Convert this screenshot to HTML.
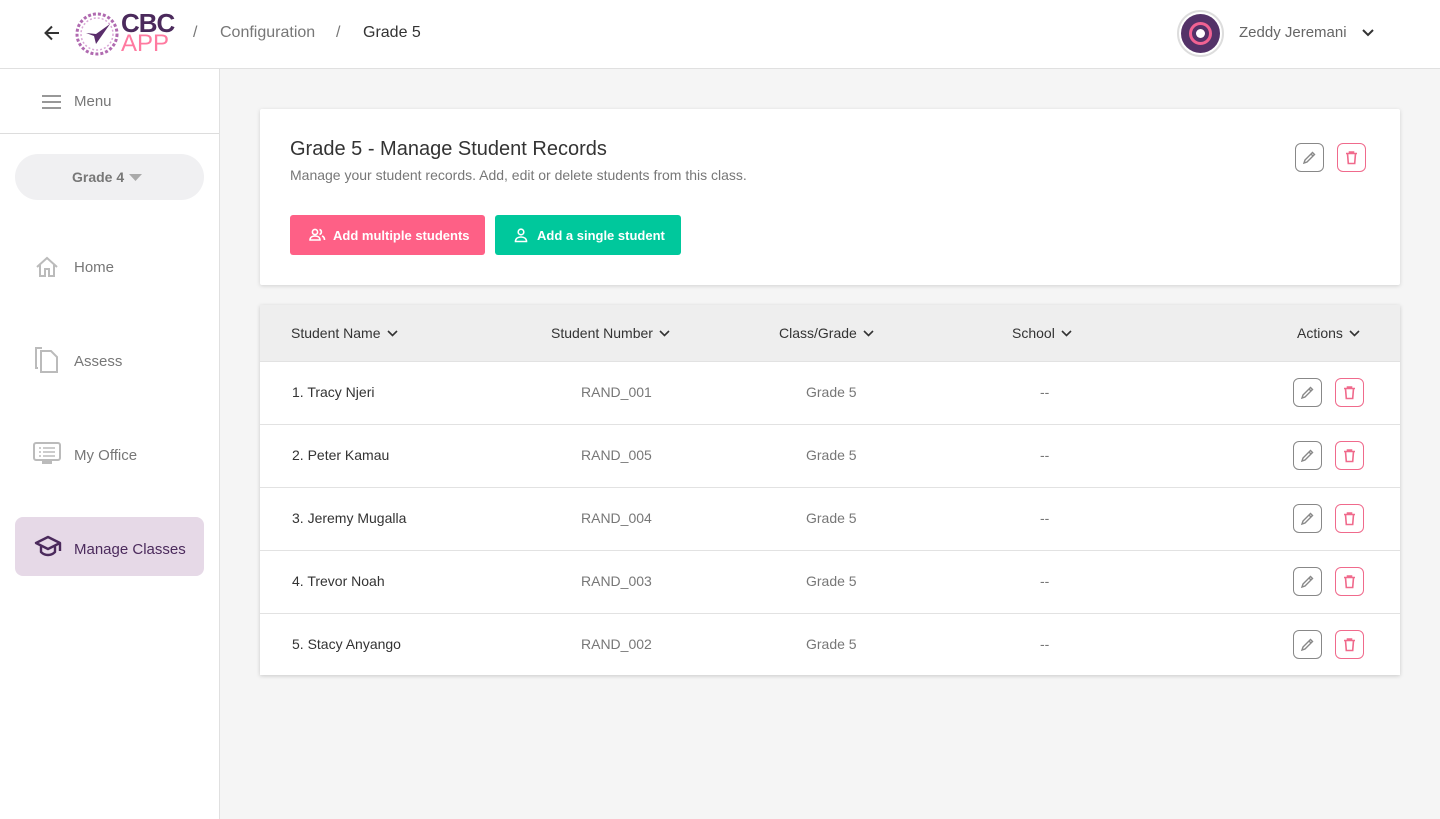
<!DOCTYPE html>
<html><head><meta charset="utf-8"><style>
*{box-sizing:border-box;margin:0;padding:0}
body{width:1440px;height:819px;overflow:hidden;font-family:"Liberation Sans",Roboto,sans-serif;background:#f5f5f5;position:relative;color:#333}
.hdr{position:absolute;left:0;top:0;width:1440px;height:69px;background:#fff;border-bottom:1px solid #e0e0e0}
.side{position:absolute;left:0;top:69px;width:220px;height:750px;background:#fff;border-right:1px solid #e0e0e0}
.abs{position:absolute}
.card{position:absolute;left:260px;top:109px;width:1140px;height:176px;background:#fff;box-shadow:0 1px 4px rgba(0,0,0,.15);border-radius:2px}
.tbl{position:absolute;left:260px;top:305px;width:1140px;height:370px;background:#fff;box-shadow:0 1px 4px rgba(0,0,0,.18)}
.th{position:absolute;left:0;top:0;width:1140px;height:56px;background:#eee}
.row{position:absolute;left:0;width:1140px;height:63px;border-top:1px solid #e2e2e2}
.t{position:absolute;font-size:14px;white-space:nowrap}
.th .t svg{margin-left:6px;vertical-align:1px}
.ib{position:absolute;width:29px;height:29px;border:1.5px solid #888;border-radius:6px;background:#fff}
.ib.d{border-color:#f06a8c}
.ib svg{position:absolute;left:6px;top:6px}
.nav{position:absolute;left:74px;font-size:15px;color:#777}
</style></head><body>
<div class="hdr">
 <svg class="abs" style="left:42px;top:23px" width="20" height="20" viewBox="0 0 20 20"><path d="M17 10H4M10 3.5L3.5 10 10 16.5" stroke="#333" stroke-width="2" fill="none"/></svg>
 <svg class="abs" style="left:74px;top:11px" width="46" height="46" viewBox="0 0 46 46"><circle cx="23" cy="23" r="20" fill="none" stroke="#b06ab0" stroke-width="3" stroke-dasharray="3 2"/><circle cx="23" cy="23" r="16" fill="none" stroke="#d9a6d6" stroke-width="1.5" stroke-dasharray="2 2"/><path d="M12 22l8 3 2 8 14-20-14 10" fill="#5a2d6b"/></svg>
 <div class="abs" style="left:121px;top:10px;font-size:26px;font-weight:bold;color:#4b2a5c;letter-spacing:-1px;line-height:26px">CBC</div>
 <div class="abs" style="left:121px;top:32px;font-size:24px;color:#ff7aa0;line-height:24px">APP</div>
 <div class="t" style="left:193px;top:24px;font-size:16px;color:#777">/</div>
 <div class="t" style="left:220px;top:24px;font-size:16px;color:#777">Configuration</div>
 <div class="t" style="left:336px;top:24px;font-size:16px;color:#777">/</div>
 <div class="t" style="left:363px;top:24px;font-size:16px;color:#333">Grade 5</div>
 <div class="abs" style="left:1177px;top:10px;width:47px;height:47px;border-radius:50%;border:2px solid #ddd;background:#fff"></div>
 <div class="abs" style="left:1181px;top:14px;width:39px;height:39px;border-radius:50%;background:#533268"></div>
 <div class="abs" style="left:1189px;top:22px;width:23px;height:23px;border-radius:50%;border:3px solid #f06292;background:#533268"></div>
 <div class="abs" style="left:1196px;top:29px;width:9px;height:9px;border-radius:50%;background:#fff"></div>
 <div class="t" style="left:1239px;top:24px;font-size:15px;color:#666">Zeddy Jeremani</div>
 <svg class="abs" style="left:1361px;top:28px" width="14" height="10" viewBox="0 0 14 10"><path d="M2 2l5 5 5-5" stroke="#333" stroke-width="2" fill="none"/></svg>
</div>
<div class="side">
 <svg class="abs" style="left:42px;top:26px" width="19" height="14"><path d="M0 1h19M0 7h19M0 13h19" stroke="#777" stroke-width="1.6"/></svg>
 <div class="t" style="left:74px;top:24px;font-size:15px;color:#777">Menu</div>
 <div class="abs" style="left:0;top:64px;width:219px;height:1px;background:#ddd"></div>
 <div class="abs" style="left:15px;top:85px;width:189px;height:46px;border-radius:23px;background:#f0f0f2"></div>
 <div class="t" style="left:72px;top:100px;font-weight:bold;color:#777">Grade 4</div>
 <svg class="abs" style="left:129px;top:105px" width="13" height="7"><path d="M0 0h13L6.5 7z" fill="#aaa"/></svg>
 <svg class="abs" style="left:35px;top:187px" width="24" height="22" viewBox="0 0 24 22"><path d="M2 11L12 2l10 9M5 9v11h5v-7h4v7h5V9" stroke="#bbb" stroke-width="2" fill="none"/></svg>
 <div class="nav" style="top:190px">Home</div>
 <svg class="abs" style="left:34px;top:277px" width="26" height="28" viewBox="0 0 26 28"><path d="M8 2H2v20h2M7 5h10l6 6v15H7z" stroke="#bbb" stroke-width="2" fill="none"/></svg>
 <div class="nav" style="top:284px">Assess</div>
 <svg class="abs" style="left:33px;top:373px" width="28" height="24" viewBox="0 0 28 24"><rect x="1" y="1" width="26" height="17" rx="2" stroke="#bbb" stroke-width="2" fill="none"/><path d="M6 6h2M10 6h12M6 10h2M10 10h12M6 14h2M10 14h12" stroke="#bbb" stroke-width="1.5"/><rect x="9" y="19" width="10" height="3" fill="#bbb"/></svg>
 <div class="nav" style="top:378px">My Office</div>
 <div class="abs" style="left:15px;top:448px;width:189px;height:59px;border-radius:8px;background:#e6d9e7"></div>
 <svg class="abs" style="left:34px;top:466px" width="28" height="22" viewBox="0 0 28 22"><path d="M14 2L2 8l12 6 12-6zM7 11v6c4 4 10 4 14 0v-6M26 8v8" stroke="#4b2a5c" stroke-width="2.4" fill="none" stroke-linejoin="round"/></svg>
 <div class="nav" style="top:472px;color:#4b2a5c">Manage Classes</div>
</div>
<div class="card">
 <div class="t" style="left:30px;top:29px;font-size:20px;color:#333">Grade 5 - Manage Student Records</div>
 <div class="t" style="left:30px;top:58px;font-size:14px;color:#777">Manage your student records. Add, edit or delete students from this class.</div>
 <div class="abs" style="left:30px;top:106px;width:195px;height:40px;border-radius:3px;background:#fe6086"></div>
 <svg class="abs" style="left:48px;top:119px" width="18" height="14" viewBox="0 0 18 14"><circle cx="7" cy="4" r="2.6" stroke="#fff" stroke-width="1.6" fill="none"/><path d="M2 12c0-3 2.5-4 5-4s5 1 5 4zM11.5 1.5a2.6 2.6 0 010 5M14 8c1.5.5 2.5 1.5 2.5 4" stroke="#fff" stroke-width="1.6" fill="none"/></svg>
 <div class="t" style="left:73px;top:119px;font-size:13px;font-weight:bold;color:#fff">Add multiple students</div>
 <div class="abs" style="left:235px;top:106px;width:186px;height:40px;border-radius:3px;background:#00c89c"></div>
 <svg class="abs" style="left:254px;top:119px" width="14" height="15" viewBox="0 0 14 15"><circle cx="7" cy="4" r="2.8" stroke="#fff" stroke-width="1.6" fill="none"/><path d="M1.5 13.5c0-3 2.5-4.5 5.5-4.5s5.5 1.5 5.5 4.5z" stroke="#fff" stroke-width="1.6" fill="none"/></svg>
 <div class="t" style="left:277px;top:119px;font-size:13px;font-weight:bold;color:#fff">Add a single student</div>
 <div class="ib" style="left:1035px;top:34px"><svg width="15" height="15" viewBox="0 0 15 15"><path d="M2 13l1-3 7.5-7.5 2 2L5 12zM9 4l2 2" stroke="#888" stroke-width="1.4" fill="none"/></svg></div>
 <div class="ib d" style="left:1077px;top:34px"><svg width="15" height="15" viewBox="0 0 15 15"><path d="M2 3.5h11M5.5 3.5V2h4v1.5M3.5 3.5l.8 10h6.4l.8-10" stroke="#f06a8c" stroke-width="1.6" fill="none"/></svg></div>
</div>
<div class="tbl">
 <div class="th">
  <div class="t" style="left:31px;top:20px;color:#333">Student Name<svg width="11" height="7" viewBox="0 0 11 7"><path d="M1 1l4.5 4.5L10 1" stroke="#333" stroke-width="1.6" fill="none"/></svg></div>
  <div class="t" style="left:291px;top:20px;color:#333">Student Number<svg width="11" height="7" viewBox="0 0 11 7"><path d="M1 1l4.5 4.5L10 1" stroke="#333" stroke-width="1.6" fill="none"/></svg></div>
  <div class="t" style="left:519px;top:20px;color:#333">Class/Grade<svg width="11" height="7" viewBox="0 0 11 7"><path d="M1 1l4.5 4.5L10 1" stroke="#333" stroke-width="1.6" fill="none"/></svg></div>
  <div class="t" style="left:752px;top:20px;color:#333">School<svg width="11" height="7" viewBox="0 0 11 7"><path d="M1 1l4.5 4.5L10 1" stroke="#333" stroke-width="1.6" fill="none"/></svg></div>
  <div class="t" style="left:1037px;top:20px;color:#333">Actions<svg width="11" height="7" viewBox="0 0 11 7"><path d="M1 1l4.5 4.5L10 1" stroke="#333" stroke-width="1.6" fill="none"/></svg></div>
 </div>
 <div class="row" style="top:56px"><div class="t" style="left:32px;top:22px">1. Tracy Njeri</div><div class="t" style="left:321px;top:22px;color:#777">RAND_001</div><div class="t" style="left:546px;top:22px;color:#777">Grade 5</div><div class="t" style="left:780px;top:22px;color:#777">--</div>
  <div class="ib" style="left:1033px;top:16px"><svg width="15" height="15" viewBox="0 0 15 15"><path d="M2 13l1-3 7.5-7.5 2 2L5 12zM9 4l2 2" stroke="#888" stroke-width="1.4" fill="none"/></svg></div><div class="ib d" style="left:1075px;top:16px"><svg width="15" height="15" viewBox="0 0 15 15"><path d="M2 3.5h11M5.5 3.5V2h4v1.5M3.5 3.5l.8 10h6.4l.8-10" stroke="#f06a8c" stroke-width="1.6" fill="none"/></svg></div></div>
 <div class="row" style="top:119px"><div class="t" style="left:32px;top:22px">2. Peter Kamau</div><div class="t" style="left:321px;top:22px;color:#777">RAND_005</div><div class="t" style="left:546px;top:22px;color:#777">Grade 5</div><div class="t" style="left:780px;top:22px;color:#777">--</div>
  <div class="ib" style="left:1033px;top:16px"><svg width="15" height="15" viewBox="0 0 15 15"><path d="M2 13l1-3 7.5-7.5 2 2L5 12zM9 4l2 2" stroke="#888" stroke-width="1.4" fill="none"/></svg></div><div class="ib d" style="left:1075px;top:16px"><svg width="15" height="15" viewBox="0 0 15 15"><path d="M2 3.5h11M5.5 3.5V2h4v1.5M3.5 3.5l.8 10h6.4l.8-10" stroke="#f06a8c" stroke-width="1.6" fill="none"/></svg></div></div>
 <div class="row" style="top:182px"><div class="t" style="left:32px;top:22px">3. Jeremy Mugalla</div><div class="t" style="left:321px;top:22px;color:#777">RAND_004</div><div class="t" style="left:546px;top:22px;color:#777">Grade 5</div><div class="t" style="left:780px;top:22px;color:#777">--</div>
  <div class="ib" style="left:1033px;top:16px"><svg width="15" height="15" viewBox="0 0 15 15"><path d="M2 13l1-3 7.5-7.5 2 2L5 12zM9 4l2 2" stroke="#888" stroke-width="1.4" fill="none"/></svg></div><div class="ib d" style="left:1075px;top:16px"><svg width="15" height="15" viewBox="0 0 15 15"><path d="M2 3.5h11M5.5 3.5V2h4v1.5M3.5 3.5l.8 10h6.4l.8-10" stroke="#f06a8c" stroke-width="1.6" fill="none"/></svg></div></div>
 <div class="row" style="top:245px"><div class="t" style="left:32px;top:22px">4. Trevor Noah</div><div class="t" style="left:321px;top:22px;color:#777">RAND_003</div><div class="t" style="left:546px;top:22px;color:#777">Grade 5</div><div class="t" style="left:780px;top:22px;color:#777">--</div>
  <div class="ib" style="left:1033px;top:16px"><svg width="15" height="15" viewBox="0 0 15 15"><path d="M2 13l1-3 7.5-7.5 2 2L5 12zM9 4l2 2" stroke="#888" stroke-width="1.4" fill="none"/></svg></div><div class="ib d" style="left:1075px;top:16px"><svg width="15" height="15" viewBox="0 0 15 15"><path d="M2 3.5h11M5.5 3.5V2h4v1.5M3.5 3.5l.8 10h6.4l.8-10" stroke="#f06a8c" stroke-width="1.6" fill="none"/></svg></div></div>
 <div class="row" style="top:308px"><div class="t" style="left:32px;top:22px">5. Stacy Anyango</div><div class="t" style="left:321px;top:22px;color:#777">RAND_002</div><div class="t" style="left:546px;top:22px;color:#777">Grade 5</div><div class="t" style="left:780px;top:22px;color:#777">--</div>
  <div class="ib" style="left:1033px;top:16px"><svg width="15" height="15" viewBox="0 0 15 15"><path d="M2 13l1-3 7.5-7.5 2 2L5 12zM9 4l2 2" stroke="#888" stroke-width="1.4" fill="none"/></svg></div><div class="ib d" style="left:1075px;top:16px"><svg width="15" height="15" viewBox="0 0 15 15"><path d="M2 3.5h11M5.5 3.5V2h4v1.5M3.5 3.5l.8 10h6.4l.8-10" stroke="#f06a8c" stroke-width="1.6" fill="none"/></svg></div></div>
</div>
</body></html>
